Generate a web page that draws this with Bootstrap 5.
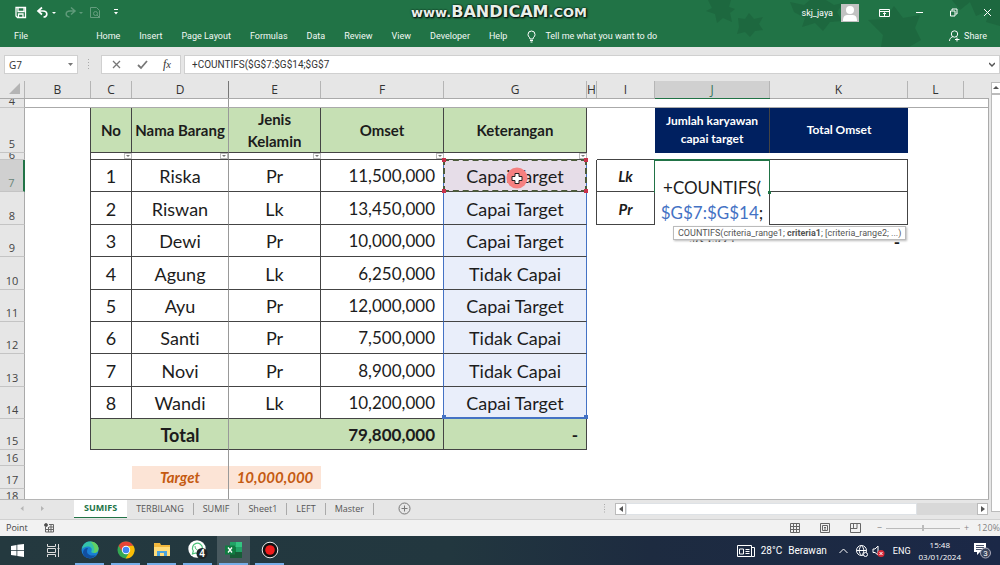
<!DOCTYPE html>
<html lang="id">
<head>
<meta charset="utf-8">
<meta name="viewport" content="width=device-width, initial-scale=1">
<title>Excel - SUMIFS</title>
<link rel="stylesheet" href="https://cdn.jsdelivr.net/npm/bootstrap@5.3.0/dist/css/bootstrap.min.css">
<script src="https://cdn.jsdelivr.net/npm/bootstrap@5.3.0/dist/js/bootstrap.bundle.min.js"></script>
<style>
body{font-family:"Open Sans","Noto Sans",sans-serif;font-size:9px;line-height:12px;color:#333;background:#e6e6e6}
svg{display:block;flex:none}
button,input,select{font:inherit;color:inherit}
.bare{border:0;background:none;padding:0}
/* title bar and ribbon */
.titlebar{background:#217346;color:#fff;height:47px;font-family:Roboto,sans-serif}
.quick{height:25px;padding-left:14px}
.watermark{left:0;right:0;top:3px;padding-right:2px;font-family:"DejaVu Sans",sans-serif;font-weight:700;font-size:13px;line-height:18px;color:#e8efe9;text-shadow:0 0 2px #000,1px 1px 2px #000}
.watermark b{font-size:16px}
.ribbon{height:22px;padding:0 13px 0 14px}
.ribbon a{color:#f2f8f4;text-decoration:none}
.ribbon .menus{gap:19px;margin-left:68px}
.leaves{right:0;top:0}
.winbtns{gap:25px;margin-left:20px;margin-right:8px}
/* formula bar */
.formulabar{height:28px;padding-top:8px;font-size:10px}
.boxed{background:#fff;border:1px solid #d0d0d0;height:19px}
.namebox{width:74px;margin-left:4px}
.namebox select{appearance:none;width:100%;border:0;background:none;padding:0 4px}
.fxbox{width:80px;margin-left:10px;gap:15px}
.fxinput{margin-left:3px;font-family:Roboto,sans-serif}
.fxinput input{border:0;outline:0;background:none;padding:0 0 0 7px;min-width:0}
.fxname{font-family:"Liberation Serif",serif;font-size:12px}
/* grid */
.sheetwrap{background:#fff}
.gridtable{table-layout:fixed;width:100%;border-collapse:separate;border-spacing:0;font-family:Lato,sans-serif;font-size:18px;line-height:18px;color:#1c1c1c;text-align:center;font-variant-ligatures:none}
.gridtable td,.gridtable th{padding:0;border-color:#444;overflow:visible;white-space:nowrap}
.gridtable thead th{height:24px;vertical-align:bottom;background:#e6e6e6;font-family:"Open Sans",sans-serif;font-weight:400;font-size:12px;border-bottom:1px solid #aaa;color:#333}
.gridtable thead th div{border-right:1px solid #b5b5b5;height:17px;line-height:17px}
.gridtable thead th.cur{border-bottom-color:#217346}
.gridtable thead th.cur div{background:#d0d0d0;color:#36735a}
.gridtable thead th:nth-child(4) div{border-color:#777}
.gridtable tbody th{background:#e6e6e6;border-right:1px solid #aaa;border-bottom:1px solid #c4c4c4;vertical-align:bottom;font-family:"Open Sans",sans-serif;font-weight:400;font-size:11px;line-height:14px;color:#444}
.gridtable tbody tr:not(.h4r,.h6r,.h16,.h18) th{padding-bottom:1px}
.gridtable tbody tr.now th{background:#d0d0d0;border-right:2px solid #217346;color:#6a8578}
.gridtable .h5r th{padding-bottom:2px}
.gridtable tr td:nth-child(4){border-right:1px solid #999}
.gridtable tr td:last-child{border-right:1px solid #aaa}
.gridtable .h32 td,.gridtable .h33 td,.gridtable .h15 td{padding-top:2px}
.sliver{display:flex;justify-content:center;align-items:flex-end;overflow:hidden}
.h4r{height:9px}.h4r td{border-bottom:1px solid #aaa!important}.h4r .sliver{height:8px;line-height:12px}
.h5r{height:45px}.h6r{height:7px;line-height:6px}.h6r .sliver{height:6px;line-height:9px}
.h32{height:32px}.h33{height:33px}.h15{height:31px}.h16{height:16px}.h17{height:23px}.h18{height:10px}
.h18 .sliver{height:10px;align-items:flex-start;line-height:14px}
.br{border-right:1px solid}.bb{border-bottom:1px solid}
.green{background:#c6e0b4}
.cap{font-weight:700;font-size:15px;line-height:22px}
.navy{background:#002060;color:#fff;font-weight:700;font-size:12px;line-height:18px}
.num{text-align:right;font-size:17px;padding-right:8px!important}
.peach{background:#fce4d6;color:#c55a11;font-weight:700;font-style:italic;font-size:15px}
.lbl{font-weight:700;font-style:italic;font-size:15px}
.rng{background:#e9eefa;border-right:1px solid #4472c4!important}
.rngleft{border-right:1px solid #4472c4!important}
.rngend{border-bottom:2px solid #4472c4!important}
.first{background:#e6dde8}
.filter{width:8px;height:6px;border:1px solid #bbb;background:#fff;padding:0;display:block;margin-left:auto}
.filter svg{margin:auto;fill:#777}
.ants{inset:-1px;border:2px dashed #4c5a3c}
.knob{width:4px;height:4px;background:#c8324b}
.knob.blue{background:#4472c4}
.knob.tl{left:-2px;top:-2px}.knob.tr{right:-2px;top:-2px}.knob.bl{left:-2px;bottom:-2px}.knob.brt{right:-2px;bottom:-2px}
.editor{left:0;top:0;right:0;height:82px;background:#fff;font-size:17px;line-height:25px;padding-top:15px;overflow:hidden;z-index:2}
.editor span{color:#4472c4}
.active-cell{inset:-1px;border:1px solid #217346;border-top-width:2px;border-bottom:0;z-index:3}
.active-cell i{width:3px;height:3px;right:-2px;bottom:-1px;background:#217346}
.tip{left:18px;top:66px;height:14px;z-index:4;background:#fff;border:1px solid #bbb;box-shadow:1px 1px 2px #bbb;font-family:Roboto,sans-serif;font-size:9px;line-height:12px;color:#555;padding:0 4px;white-space:nowrap}
.edge-g{border-color:#217346!important}
.pointer{left:59px;top:5px;z-index:3}
.vscroll{width:9px;margin-left:2px;padding:7px 0 7px;background:#e6e6e6}
.vscroll .thumb{background:#fff;border:1px solid #bbb;border-right:0}
/* tabs and status */
.tabs{height:20px;border-top:1px solid #b5b5b5;background:#e6e6e6;padding-bottom:2px}
.tabs a{color:#555;text-decoration:none;line-height:12px;padding:0 9px;border-right:1px solid #aaa}
.tabs a.on{background:#fff;color:#217346;font-weight:700;line-height:16px;height:18px;padding:0 10px;border:0;border-bottom:1px solid #217346}
.hscroll{width:373px;height:12px;background:#d8d8d8;margin-right:1px}
.hscroll button{width:11px;background:#fff;border:1px solid #bbb;padding:0}
.hscroll .hthumb{width:78%}
.status{height:17px;background:#f2f2f2;border-top:1px solid #d0d0d0;color:#444;padding-left:6px}
.views{gap:20px}
.zoomer{appearance:none;width:74px;height:7px;background:linear-gradient(#bbb,#bbb) center/100% 1px no-repeat;margin:0}
.zoomer::-webkit-slider-thumb{appearance:none;width:2px;height:6px;background:#bbb}
/* taskbar */
.taskbar{height:29px;background:linear-gradient(90deg,#24393f,#22373f 45%,#1d2b40 65%,#1b2847);color:#fff;padding:0 8px 0 3px;font-family:Roboto,sans-serif}
.apps{gap:7px}
.apps button{width:29px;height:29px}
.apps .run{border-bottom:2px solid #76aee8}
.apps .act{background:#48595f;box-shadow:-2px 0 #48595f,2px 0 #48595f}
.weather{font-size:10px;gap:6px;margin-right:12px}
.clock{font-family:"Open Sans",sans-serif;font-size:8px;margin-right:13px}
</style>
</head>
<body class="vh-100 d-flex flex-column overflow-hidden">
<header class="titlebar position-relative">
  <svg class="leaves position-absolute" width="300" height="47" viewBox="0 0 300 47" fill="#1c613b" opacity=".6"><path d="M8 0l4 8-6 3 9 3 2 9 6-5 9 4-2-9 5-4-6-2 2-7zM38 18l7 1 4-6 5 6 9-2-4 7 4 6-8 1-5 6-5-5-8 2 2-7zM90 2l14 3 6-5h16l8 5 9-2-6 9 5 9-12 1-7 9-8-8-13 4 3-9-11-6zM168 20l17-1 9-13 9 12 17-3-5 13 6 12-12 7H181l2-12zM252 0l8 10 10-8 6 14 14-6-4 12 14 4V0z"/></svg>
  <div class="watermark position-absolute text-center">www.<b>BANDICAM</b>.COM</div>
  <div class="quick d-flex align-items-center position-relative">
    <button class="bare" aria-label="Save"><svg width="13" height="13" viewBox="0 0 13 13" fill="none" stroke="#fff" stroke-width="1.3"><path d="M2 1.5h9.5v10H3.5L2 10zM4 1.5v4h6v-4M4.5 11.500v-3.500h4.500v3.500"/></svg></button>
    <button class="bare ms-2" aria-label="Undo"><svg width="23" height="13" viewBox="0 0 23 13"><path d="M7 1.500L3 5l4 3.500M3.500 5H8c5 0 5 6 .5 6" fill="none" stroke="#fff" stroke-width="1.700"/><path d="M17 6h4l-2 2z" fill="#fff"/></svg></button>
    <button class="bare ms-1" aria-label="Redo"><svg width="23" height="13" viewBox="0 0 23 13" opacity=".28"><path d="M9 1.500L13 5 9 8.500M12.500 5H8c-5 0-5 6-.5 6" fill="none" stroke="#fff" stroke-width="1.500"/><path d="M17 6h4l-2 2z" fill="#fff"/></svg></button>
    <button class="bare ms-1" aria-label="Print preview"><svg width="12" height="13" viewBox="0 0 12 13" fill="none" stroke="#fff" opacity=".3"><path d="M1.500 11.500v-10h6l3 3v7z"/><circle cx="6.500" cy="7.500" r="2"/><path d="M8 9l3 3"/></svg></button>
    <button class="bare ms-2 ps-1" aria-label="Customize"><svg width="7" height="7" viewBox="0 0 7 7" fill="#fff"><path d="M1 0h4v1H1zM1 3h4L3 5.500z"/></svg></button>
    <span class="ms-auto me-2">skj_jaya</span>
    <svg width="18" height="18" viewBox="0 0 18 18"><path fill="#c2c2c2" d="M0 0h18v18H0z"/><circle cx="9" cy="6" r="4" fill="#fff"/><path d="M2 17c0-7 4-6 7-6s7-1 7 6z" fill="#fff"/></svg>
    <div class="winbtns d-flex align-items-center">
    <button class="bare" aria-label="Ribbon options"><svg width="11" height="10" viewBox="0 0 11 10" fill="none" stroke="#fff"><path d="M.5 1.500h10v7H.5zM.5 3.500h10M5.500 8V5M4 6l1.500-1.500L7 6"/></svg></button>
    <button class="bare" aria-label="Minimize"><svg width="9" height="9" viewBox="0 0 9 9" stroke="#fff"><path d="M1 4.500h7"/></svg></button>
    <button class="bare" aria-label="Restore"><svg width="9" height="9" viewBox="0 0 9 9" fill="none" stroke="#fff"><path d="M1.500 3h4.500v5H1.500zM3 2.500v-1.500h5v5H6.500"/></svg></button>
    <button class="bare" aria-label="Close"><svg width="9" height="9" viewBox="0 0 9 9" stroke="#fff"><path d="M1 1l7 7M8 1L1 8"/></svg></button>
    </div>
  </div>
  <nav class="ribbon d-flex align-items-center position-relative">
    <a href="#">File</a>
    <div class="menus d-flex"><a href="#">Home</a><a href="#">Insert</a><a href="#">Page Layout</a><a href="#">Formulas</a><a href="#">Data</a><a href="#">Review</a><a href="#">View</a><a href="#">Developer</a><a href="#">Help</a>
    <a href="#" class="d-flex gap-2 align-items-center"><svg width="11" height="13" viewBox="0 0 11 13" fill="none" stroke="#fff"><path d="M4 9C4 7 2 7 2 4.500a3.500 3.500 0 0 1 7 0C9 7 7 7 7 9zM4 10.500h3M4.500 12h2"/></svg>Tell me what you want to do</a></div>
    <a href="#" class="ms-auto d-flex gap-1 align-items-center"><svg width="11" height="12" viewBox="0 0 11 12" fill="none" stroke="#fff"><circle cx="5.500" cy="4" r="3.200"/><path d="M.5 11c0-2 1-3.500 3-4M8 7.500v4M6 9.500h4.500"/></svg>Share</a>
  </nav>
</header>
<section class="formulabar d-flex">
  <div class="namebox boxed d-flex align-items-center position-relative"><select aria-label="Name box"><option>G7</option></select><svg class="position-absolute end-0 me-1" width="5" height="4" viewBox="0 0 5 4" fill="#777"><path d="M0 0h5L2.500 3z"/></svg></div>
  <svg class="ms-2 mt-1" width="5" height="11" viewBox="0 0 5 11" fill="#aaa"><path d="M2 0h1v1H2zM2 3h1v1H2zM2 6h1v1H2zM2 9h1v1H2z"/></svg>
  <div class="fxbox boxed d-flex align-items-center justify-content-center">
    <button class="bare" aria-label="Cancel"><svg width="11" height="11" viewBox="0 0 11 11" stroke="#777" stroke-width="1.300"><path d="M2 2l7 7M9 2L2 9"/></svg></button>
    <button class="bare" aria-label="Enter"><svg width="11" height="11" viewBox="0 0 11 11" fill="none" stroke="#777" stroke-width="1.800"><path d="M1 6l3 3 6-7"/></svg></button>
    <button class="bare fst-italic fxname" aria-label="Insert function">f<small>x</small></button>
  </div>
  <div class="fxinput boxed flex-grow-1 d-flex align-items-center pe-1"><input class="flex-grow-1" aria-label="Formula" value="+COUNTIFS($G$7:$G$14;$G$7"><svg width="6" height="6" viewBox="0 0 6 6" fill="none" stroke="#555" stroke-width="1.500"><path d="M0 1l3 3 3-3"/></svg></div>
</section>
<main class="flex-grow-1 d-flex overflow-hidden">
  <div class="flex-grow-1 d-flex flex-column overflow-hidden">
    <div class="sheetwrap flex-grow-1 overflow-hidden">
    <table class="gridtable">
      <colgroup><col style="width:25px"><col style="width:66px"><col style="width:41px"><col style="width:97px"><col style="width:92px"><col style="width:123px"><col style="width:143px"><col style="width:10px"><col style="width:58px"><col style="width:115px"><col style="width:138px"><col style="width:56px"><col></colgroup>
      <thead><tr><th><div class="d-flex justify-content-end align-items-end pe-1 pb-1"><svg width="11" height="11" viewBox="0 0 11 11" fill="#b4b4b4"><path d="M11 0v11H0z"/></svg></div></th><th><div>B</div></th><th><div>C</div></th><th><div>D</div></th><th><div>E</div></th><th><div>F</div></th><th><div>G</div></th><th><div>H</div></th><th><div>I</div></th><th class="cur"><div>J</div></th><th><div>K</div></th><th><div>L</div></th><th><div class="border-0"></div></th></tr></thead>
      <tbody>
      <tr class="h4r"><th><div class="sliver">4</div></th><td></td><td></td><td></td><td></td><td></td><td></td><td></td><td></td><td></td><td></td><td></td><td></td></tr>
      <tr class="h5r"><th>5</th><td class="br"></td><td class="green cap br bb">No</td><td class="green cap bb">Nama Barang</td><td class="green cap br bb">Jenis<br>Kelamin</td><td class="green cap br bb">Omset</td><td class="green cap br bb">Keterangan</td><td></td><td></td><td class="navy br">Jumlah karyawan<br>capai target</td><td class="navy">Total Omset</td><td></td><td></td></tr>
      <tr class="h6r"><th><div class="sliver">6</div></th><td class="br"></td>
        <td class="bb"><button class="filter" aria-label="Filter No"><svg width="4" height="2" viewBox="0 0 4 2"><path d="M0 0h4L2 2z"/></svg></button></td>
        <td class="bb"><button class="filter" aria-label="Filter Nama"><svg width="4" height="2" viewBox="0 0 4 2"><path d="M0 0h4L2 2z"/></svg></button></td>
        <td class="bb"><button class="filter" aria-label="Filter Jenis"><svg width="4" height="2" viewBox="0 0 4 2"><path d="M0 0h4L2 2z"/></svg></button></td>
        <td class="bb"><button class="filter" aria-label="Filter Omset"><svg width="4" height="2" viewBox="0 0 4 2"><path d="M0 0h4L2 2z"/></svg></button></td>
        <td class="bb"><button class="filter" aria-label="Filter Keterangan"><svg width="4" height="2" viewBox="0 0 4 2"><path d="M0 0h4L2 2z"/></svg></button></td>
        <td></td><td class="bb"></td><td class="bb edge-g"></td><td class="bb"></td><td></td><td></td></tr>
      <tr class="h32 now"><th>7</th><td class="br"></td><td class="br bb">1</td><td class="bb">Riska</td><td class="br bb">Pr</td><td class="num rngleft bb">11,500,000</td>
        <td class="rng first bb position-relative">Capai Target
          <div class="ants position-absolute"></div>
          <i class="knob tl position-absolute"></i><i class="knob tr position-absolute"></i><i class="knob bl position-absolute"></i><i class="knob brt position-absolute"></i>
          <svg class="pointer position-absolute" width="28" height="26" viewBox="0 0 28 26"><circle cx="14" cy="13" r="10.500" fill="#f58080"/><path d="M12 8.500h4v3h3v4h-3v3h-4v-3H9v-4h3z" fill="#fff" stroke="#222"/></svg>
        </td><td class="br"></td><td class="br bb lbl">Lk</td>
        <td class="br position-relative"><div class="editor position-absolute">+COUNTIFS(<br><span>$G$7:$G$14</span>;<br>$G$7|</div><div class="active-cell position-absolute"><i class="position-absolute"></i></div><div class="tip position-absolute">COUNTIFS(criteria_range1; <b>criteria1</b>; [criteria_range2; ...)</div></td><td class="br bb"></td><td></td><td></td></tr>
      <tr class="h33"><th>8</th><td class="br"></td><td class="br bb">2</td><td class="bb">Riswan</td><td class="br bb">Lk</td><td class="num rngleft bb">13,450,000</td><td class="rng bb">Capai Target</td><td class="br"></td><td class="br bb lbl">Pr</td><td class="br"></td><td class="br bb"></td><td></td><td></td></tr>
      <tr class="h32"><th>9</th><td class="br"></td><td class="br bb">3</td><td class="bb">Dewi</td><td class="br bb">Pr</td><td class="num rngleft bb">10,000,000</td><td class="rng bb">Capai Target</td><td></td><td></td><td></td><td class="num fw-bold">-</td><td></td><td></td></tr>
      <tr class="h33"><th>10</th><td class="br"></td><td class="br bb">4</td><td class="bb">Agung</td><td class="br bb">Lk</td><td class="num rngleft bb">6,250,000</td><td class="rng bb">Tidak Capai</td><td></td><td></td><td></td><td></td><td></td><td></td></tr>
      <tr class="h32"><th>11</th><td class="br"></td><td class="br bb">5</td><td class="bb">Ayu</td><td class="br bb">Pr</td><td class="num rngleft bb">12,000,000</td><td class="rng bb">Capai Target</td><td></td><td></td><td></td><td></td><td></td><td></td></tr>
      <tr class="h32"><th>12</th><td class="br"></td><td class="br bb">6</td><td class="bb">Santi</td><td class="br bb">Pr</td><td class="num rngleft bb">7,500,000</td><td class="rng bb">Tidak Capai</td><td></td><td></td><td></td><td></td><td></td><td></td></tr>
      <tr class="h33"><th>13</th><td class="br"></td><td class="br bb">7</td><td class="bb">Novi</td><td class="br bb">Pr</td><td class="num rngleft bb">8,900,000</td><td class="rng bb">Tidak Capai</td><td></td><td></td><td></td><td></td><td></td><td></td></tr>
      <tr class="h32"><th>14</th><td class="br"></td><td class="br bb">8</td><td class="bb">Wandi</td><td class="br bb">Lk</td><td class="num rngleft bb">10,200,000</td><td class="rng rngend position-relative">Capai Target<i class="knob blue bl position-absolute"></i><i class="knob blue brt position-absolute"></i></td><td></td><td></td><td></td><td></td><td></td><td></td></tr>
      <tr class="h15 fw-bold"><th>15</th><td class="br"></td><td class="green bb"></td><td class="green bb">Total</td><td class="green bb"></td><td class="green num br bb">79,800,000</td><td class="green num br bb">-</td><td></td><td></td><td></td><td></td><td></td><td></td></tr>
      <tr class="h16"><th>16</th><td></td><td></td><td></td><td></td><td></td><td></td><td></td><td></td><td></td><td></td><td></td><td></td></tr>
      <tr class="h17"><th>17</th><td></td><td></td><td class="peach">Target</td><td class="peach">10,000,000</td><td></td><td></td><td></td><td></td><td></td><td></td><td></td><td></td></tr>
      <tr class="h18"><th><div class="sliver">18</div></th><td></td><td></td><td></td><td></td><td></td><td></td><td></td><td></td><td></td><td></td><td></td><td></td></tr>
      </tbody>
    </table>
    </div>
    <nav class="tabs d-flex align-items-center">
      <svg width="74" height="8" viewBox="0 0 74 8" fill="#b5b5b5"><path d="M23.500 1v5L20.500 3.500zM41 1v5l3-2.500z"/></svg>
      <a href="#" class="on align-self-start">SUMIFS</a><a href="#">TERBILANG</a><a href="#">SUMIF</a><a href="#">Sheet1</a><a href="#">LEFT</a><a href="#">Master</a>
      <button class="bare ms-4" aria-label="New sheet"><svg width="13" height="13" viewBox="0 0 13 13" fill="none" stroke="#777"><circle cx="6.500" cy="6.500" r="5.500"/><path d="M3.500 6.500h6M6.500 3.500v6"/></svg></button>
      <svg class="ms-auto me-2" width="5" height="9" viewBox="0 0 5 9" fill="#aaa"><path d="M2 0h1v1H2zM2 2.500h1v1H2zM2 5h1v1H2zM2 7.500h1v1H2z"/></svg>
      <div class="hscroll d-flex"><button aria-label="Scroll left"><svg class="m-auto" width="4" height="6" viewBox="0 0 4 6" fill="#555"><path d="M4 0v6L0 3z"/></svg></button><div class="bg-white border hthumb"></div><button class="ms-auto" aria-label="Scroll right"><svg class="m-auto" width="4" height="6" viewBox="0 0 4 6" fill="#555"><path d="M0 0v6l4-3z"/></svg></button></div>
    </nav>
  </div>
  <div class="vscroll d-flex flex-column flex-shrink-0"><button class="thumb p-0" style="height:12px" aria-label="Scroll up"><svg class="m-auto" width="6" height="3" viewBox="0 0 6 3" fill="#555"><path d="M3 0l3 3H0z"/></svg></button><div class="thumb flex-grow-1"></div></div>
</main>
<footer>
  <div class="status d-flex align-items-center">
    <span>Point</span>
    <svg class="ms-3" width="11" height="10" viewBox="0 0 11 10" fill="none" stroke="#666"><path d="M1.500 4v5h8V1.500H5M1.500 6.500h8M4.500 4v5M7 2v7M5 4h5"/><circle cx="2" cy="2" r="1.500" fill="#444"/></svg>
    <div class="views d-flex ms-auto">
    <svg width="10" height="10" viewBox="0 0 10 10" fill="none" stroke="#666"><path d="M.5.5h9v9h-9zM.5 3.500h9M.5 6.500h9M3.500.5v9M6.500.5v9"/></svg>
    <svg width="10" height="10" viewBox="0 0 10 10" fill="none" stroke="#666"><path d="M.5.5h9v9h-9zM2.500 2.500h5v5h-5zM4 4.500h2M4 6h2"/></svg>
    <svg width="11" height="10" viewBox="0 0 11 10" fill="none" stroke="#666"><path d="M.5.5h10v9H.5zM.5 5.500H7V.5M3.500.5v5"/></svg>
    </div>
    <button class="bare text-black-50 ms-3" aria-label="Zoom out">−</button>
    <input class="zoomer mx-1" type="range" min="0" max="100" value="50" aria-label="Zoom">
    <button class="bare text-black-50" aria-label="Zoom in">+</button>
    <span class="ms-2 text-black-50">120%</span>
  </div>
  <div class="taskbar d-flex align-items-center">
    <div class="apps d-flex">
      <button class="bare" aria-label="Start"><svg class="m-auto" width="13" height="13" viewBox="0 0 13 13" fill="#fff"><path d="M0 2l5.500-1v5H0zM6.300.8L13 0v6H6.300zM0 6.800h5.500v5L0 11zM6.300 6.800H13V13l-6.700-1z"/></svg></button>
      <button class="bare" aria-label="Task view"><svg class="m-auto" width="13" height="13" viewBox="0 0 13 13" fill="none" stroke="#ddd"><path d="M.5 0v2.500h8V0M.5 4.500h8v4h-8zM.5 13v-2.500h8V13M11.500 0v13M10.500 4.500h2"/></svg></button>
      <button class="bare run" aria-label="Edge"><svg class="m-auto" width="18" height="18" viewBox="0 0 18 18"><circle cx="9" cy="9" r="8.500" fill="#1a7fd4"/><path d="M1 8C2 2 6 .5 9 .5c5 0 8.500 3.500 8.500 7 0 3-2 4.500-5 4.500-2 0-2.500-1-2-2 1-3-1-4.500-4-4.500-2 0-4 1-5.500 2.500z" fill="#35c3a8"/><path d="M9 .5c5 0 8.500 3.500 8.500 7 0 3-2 4.500-5 4.500 2-4 0-9-3.500-11.500z" fill="#63d063"/><path d="M7 7c-3 5 1 9 8 7-4 5-12 4-13-2 0-3 2-5 5-5z" fill="#124f9f"/></svg></button>
      <button class="bare run" aria-label="Chrome"><svg class="m-auto" width="18" height="18" viewBox="0 0 18 18"><circle cx="9" cy="9" r="8.500" fill="#34a853"/><path d="M1.600 4.700A8.500 8.500 0 0 1 16.400 4.700L9 5z" fill="#ea4335"/><path d="M16.400 4.700A8.500 8.500 0 0 1 8.600 17.500L12.500 11 11 5z" fill="#fbbc05"/><path d="M1.600 4.700L9 5 5.500 11z" fill="#ea4335"/><circle cx="9" cy="9" r="4.200" fill="#fff"/><circle cx="9" cy="9" r="3.300" fill="#4285f4"/></svg></button>
      <button class="bare run" aria-label="Explorer"><svg class="m-auto" width="18" height="16" viewBox="0 0 18 16"><path d="M1 1h6l1 2h9v11H1z" fill="#f2b83d"/><path d="M1 5h16v9H1z" fill="#ffdc7a"/><path d="M4 14V9h10v5h-3v-3H7v3z" fill="#4ba3dc"/></svg></button>
      <button class="bare run" aria-label="WhatsApp, 4 new"><svg class="m-auto" width="20" height="19" viewBox="0 0 20 19"><circle cx="9" cy="9" r="8.700" fill="#fff"/><path d="M4.500 14l.8-3A5 5 0 1 1 8 13z" fill="none" stroke="#4cc27a" stroke-width="1.200"/><path d="M7 6c0 3 2 4.500 4 4.500" fill="none" stroke="#4cc27a"/><circle cx="14" cy="13.500" r="5.500" fill="#1d2528"/><text x="14" y="17" text-anchor="middle" font-size="10" font-weight="600" fill="#fff">4</text></svg></button>
      <button class="bare run act" aria-label="Excel"><svg class="m-auto" width="18" height="16" viewBox="0 0 18 16"><path d="M5 0h12v16H5z" fill="#21a366"/><path d="M11 0h6v5h-6z" fill="#33c481"/><path d="M5 5h6v5H5z" fill="#107c41"/><path d="M5 10h12v6H5z" fill="#185c37"/><path d="M0 3.500h10v9H0z" fill="#107c41"/><path d="M3 5.500l4 5M7 5.500l-4 5" stroke="#fff" stroke-width="1.300"/></svg></button>
      <button class="bare run" aria-label="Recorder"><svg class="m-auto" width="18" height="18" viewBox="0 0 18 18"><circle cx="9" cy="9" r="7.800" fill="#111" stroke="#eee"/><circle cx="9" cy="9" r="4.800" fill="#f01c1c"/></svg></button>
    </div>
    <div class="ms-auto d-flex align-items-center weather">
      <svg width="18" height="12" viewBox="0 0 18 12" fill="none" stroke="#fff"><path d="M.5.5h14v11H.5zM14.500 2.500h3v9h-3M2.500 4h4v5h-4zM8.500 4.500h4M8.500 6.500h4M8.500 8.500h4"/></svg>
      <span>28°C</span><span>Berawan</span>
    </div>
    <svg width="9" height="6" viewBox="0 0 9 6" fill="none" stroke="#fff"><path d="M.5 5l4-4 4 4"/></svg>
    <svg class="ms-2" width="12" height="12" viewBox="0 0 12 12" fill="none" stroke="#fff"><circle cx="5.500" cy="5.500" r="5"/><path d="M.5 5.500h10M5.500.5c-3 3-3 7 0 10M5.500.5c3 3 3 7 0 10"/><circle cx="9.500" cy="9.500" r="2" fill="#1b2847"/></svg>
    <svg class="ms-1" width="13" height="12" viewBox="0 0 13 12"><path d="M1 4h2l3-3v9L3 7.500H1z" fill="none" stroke="#fff"/><circle cx="9" cy="8.500" r="3.500" fill="#d92b3a"/><path d="M7.500 7l3 3M10.500 7l-3 3" stroke="#fff"/></svg>
    <span class="ms-2">ENG</span>
    <div class="clock ms-2 text-center">15:48<br>03/01/2024</div>
    <svg width="18" height="17" viewBox="0 0 18 17"><path d="M0 1h12v9H6l-3 3v-3H0z" fill="#fff"/><path d="M2 3.500h8M2 5.500h8M2 7.500h6" stroke="#1b2847" stroke-width=".8"/><circle cx="11.500" cy="11" r="5" fill="#39445c" stroke="#aab"/><text x="11.500" y="14" text-anchor="middle" font-size="8" fill="#fff">3</text></svg>
  </div>
</footer>
</body>
</html>
